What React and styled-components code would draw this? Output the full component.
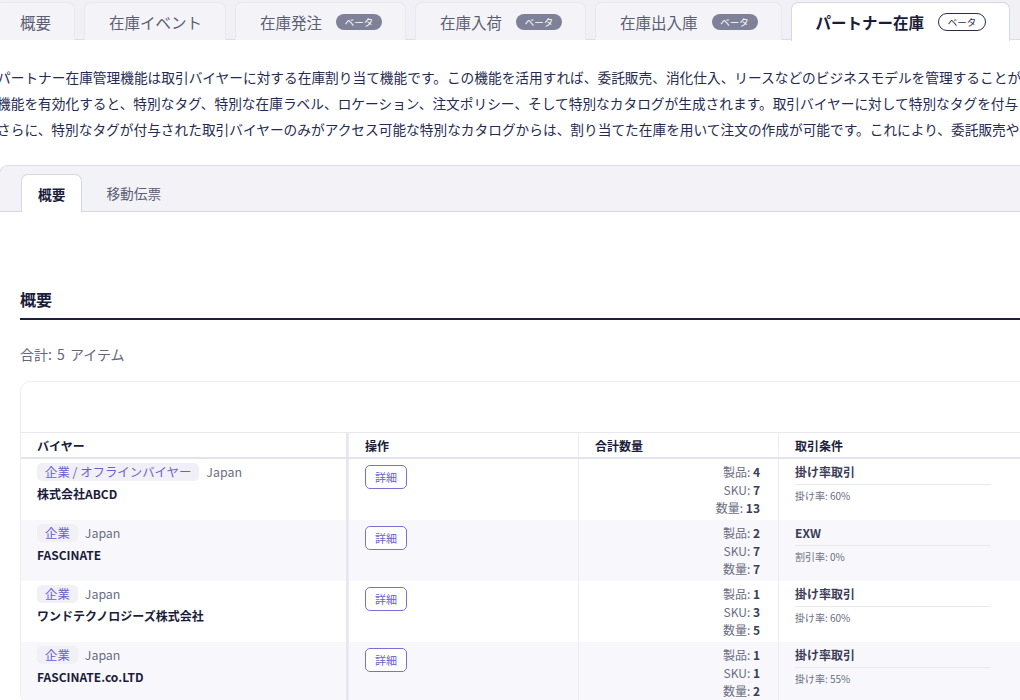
import React from "react";
import styled, { createGlobalStyle, css } from "styled-components";

const Global = createGlobalStyle`
  html, body { margin: 0; padding: 0; background: #ffffff; overflow: hidden; }
  body { font-family: "Noto Sans CJK JP", "Noto Sans", sans-serif; color: #1f2142; width: 1020px; }
  * { box-sizing: border-box; }
`;

const Page = styled.div`
  width: 1020px;
  height: 700px;
  overflow: hidden;
`;

const TabBar = styled.div`
  display: flex;
  gap: 9px;
  margin-left: -5px;
  padding-top: 2px;
  height: 40px;
  background: #f1f1f5;
  border-bottom: 1px solid #dcdce5;
  width: 1030px;
`;

const Tab = styled.div`
  display: flex;
  align-items: center;
  gap: 14px;
  height: 38px;
  padding: 0 23px 0 24px;
  font-size: 15.5px;
  color: #5b5e75;
  background: #f4f4f8;
  border: 1px solid #e8e8ee;
  border-bottom: none;
  border-radius: 7px 7px 0 0;
  white-space: nowrap;
  ${(p) =>
    p.$active &&
    css`
      background: #ffffff;
      border-color: #d8d8e2;
      color: #1b1c3c;
      font-weight: 700;
      height: 39px;
      margin-bottom: -1px;
    `}
`;

const Badge = styled.span`
  display: inline-flex;
  align-items: center;
  justify-content: center;
  width: 46px;
  height: 16px;
  border-radius: 8px;
  font-size: 9.5px;
  font-weight: 400;
  background: #7e8198;
  color: #ffffff;
  ${(p) =>
    p.$outline &&
    css`
      background: transparent;
      color: #2a2c4a;
      border: 1px solid #2a2c4a;
      width: 48px;
      height: 18px;
      border-radius: 9px;
    `}
`;

const Description = styled.div`
  padding-top: 24px;
  margin-left: -3px;
  font-size: 13.7px;
  line-height: 26px;
  color: #262a52;
`;

const Line = styled.div`
  white-space: nowrap;
`;

const SubTabBar = styled.div`
  margin-top: 23px;
  margin-left: -1px;
  width: 1030px;
  height: 47px;
  padding: 9px 0 0 21px;
  display: flex;
  align-items: flex-end;
  gap: 7px;
  background: #f3f3f7;
  border-top: 1px solid #dcdce4;
  border-left: 1px solid #dcdce4;
  border-bottom: 1px solid #d8d8e2;
  border-top-left-radius: 9px;
`;

const SubTab = styled.div`
  height: 37px;
  display: flex;
  align-items: center;
  padding: 0 16px;
  font-size: 13.7px;
  color: #5b5e75;
  border: 1px solid transparent;
  border-bottom: none;
  border-radius: 7px 7px 0 0;
  ${(p) =>
    p.$active &&
    css`
      background: #ffffff;
      border-color: #d6d6e0;
      color: #1b1c3c;
      font-weight: 700;
      margin-bottom: -1px;
      height: 38px;
    `}
`;

const Main = styled.div`
  padding: 75px 0 0 20px;
  width: 1100px;
`;

const SectionTitle = styled.h2`
  margin: 0;
  font-size: 16px;
  line-height: 24px;
  font-weight: 700;
  color: #1b1c3c;
  padding-bottom: 7px;
  border-bottom: 2px solid #1e1f3e;
`;

const Total = styled.div`
  margin-top: 24px;
  font-size: 14px;
  line-height: 20px;
  color: #62667e;
  word-spacing: 2px;
`;

const Card = styled.div`
  margin-top: 17px;
  border: 1px solid #ececf2;
  border-radius: 10px;
  overflow: hidden;
`;

const Toolbar = styled.div`
  height: 51px;
  border-bottom: 1px solid #e8e8ef;
`;

const Row = styled.div`
  display: grid;
  grid-template-columns: 327px 230px 200px 1fr;
  background: ${(p) => (p.$alt ? "#f8f8fc" : "#ffffff")};
`;

const HeaderRow = styled(Row)`
  height: 26px;
  border-bottom: 2px solid #e3e3eb;
`;

const Cell = styled.div`
  padding: 4px 16px 3px 16px;
  border-left: 1px solid #ececf2;
  ${(p) =>
    p.$first &&
    css`
      border-left: none;
      border-right: 2px solid #e6e6ee;
    `}
  ${(p) =>
    p.$right &&
    css`
      display: flex;
      flex-direction: column;
      align-items: flex-end;
      padding-right: 18px;
    `}
`;

const HeadCell = styled(Cell)`
  display: flex;
  align-items: center;
  padding-top: 0;
  padding-bottom: 0;
  font-size: 12px;
  font-weight: 700;
  color: #1b1c3c;
`;

const BuyerMeta = styled.div`
  display: flex;
  align-items: center;
  gap: 7px;
  height: 18px;
`;

const Tag = styled.span`
  display: inline-flex;
  align-items: center;
  height: 18px;
  padding: 0 8px;
  border-radius: 5px;
  background: #f0f0f6;
  color: #6b5fd2;
  font-size: 12.4px;
`;

const Country = styled.span`
  font-size: 12.4px;
  color: #6a6d82;
`;

const BuyerName = styled.div`
  margin-top: 4px;
  font-size: 12px;
  line-height: 18px;
  font-weight: 700;
  color: #1b1c3c;
`;

const DetailButton = styled.button`
  margin-top: 1px;
  width: 42px;
  height: 24px;
  padding: 0;
  border: 1px solid #7b70d6;
  border-radius: 5px;
  background: #ffffff;
  color: #6b5fd2;
  font-family: inherit;
  font-size: 11px;
`;

const QtyLine = styled.div`
  font-size: 12px;
  line-height: 18px;
  color: #6a6d82;
  white-space: nowrap;
  b {
    color: #3a3c58;
    font-weight: 700;
  }
`;

const Terms = styled.div`
  width: 196px;
`;

const TermsTitle = styled.div`
  font-size: 12px;
  line-height: 18px;
  font-weight: 700;
  color: #3a3c58;
  padding-bottom: 3px;
  border-bottom: 1px solid #e8e8ef;
`;

const TermsNote = styled.div`
  margin-top: 3px;
  font-size: 10px;
  line-height: 16px;
  color: #6a6d82;
`;

const rows = [
  { tag: "企業 / オフラインバイヤー", name: "株式会社ABCD", p: 4, sku: 7, q: 13, term: "掛け率取引", note: "掛け率: 60%" },
  { tag: "企業", name: "FASCINATE", p: 2, sku: 7, q: 7, term: "EXW", note: "割引率: 0%" },
  { tag: "企業", name: "ワンドテクノロジーズ株式会社", p: 1, sku: 3, q: 5, term: "掛け率取引", note: "掛け率: 60%" },
  { tag: "企業", name: "FASCINATE.co.LTD", p: 1, sku: 1, q: 2, term: "掛け率取引", note: "掛け率: 55%" },
];

const tabs = [
  { label: "概要" },
  { label: "在庫イベント" },
  { label: "在庫発注", beta: true },
  { label: "在庫入荷", beta: true },
  { label: "在庫出入庫", beta: true },
  { label: "パートナー在庫", beta: true, active: true },
];

export default function App() {
  return (
    <Page>
      <Global />
      <TabBar>
        {tabs.map((t) => (
          <Tab key={t.label} $active={t.active}>
            {t.label}
            {t.beta && <Badge $outline={t.active}>ベータ</Badge>}
          </Tab>
        ))}
      </TabBar>
      <Description>
        <Line>
          パートナー在庫管理機能は取引バイヤーに対する在庫割り当て機能です。この機能を活用すれば、委託販売、消化仕入、リースなどのビジネスモデルを管理することが可能です。この
        </Line>
        <Line>
          機能を有効化すると、特別なタグ、特別な在庫ラベル、ロケーション、注文ポリシー、そして特別なカタログが生成されます。取引バイヤーに対して特別なタグを付与してください。
        </Line>
        <Line>
          さらに、特別なタグが付与された取引バイヤーのみがアクセス可能な特別なカタログからは、割り当てた在庫を用いて注文の作成が可能です。これにより、委託販売やリースを管理できます。
        </Line>
      </Description>
      <SubTabBar>
        <SubTab $active>概要</SubTab>
        <SubTab>移動伝票</SubTab>
      </SubTabBar>
      <Main>
        <SectionTitle>概要</SectionTitle>
        <Total>合計: 5 アイテム</Total>
        <Card>
          <Toolbar />
          <HeaderRow>
            <HeadCell $first>バイヤー</HeadCell>
            <HeadCell>操作</HeadCell>
            <HeadCell>合計数量</HeadCell>
            <HeadCell>取引条件</HeadCell>
          </HeaderRow>
          {rows.map((r, i) => (
            <Row key={r.name} $alt={i % 2 === 1}>
              <Cell $first>
                <BuyerMeta>
                  <Tag>{r.tag}</Tag>
                  <Country>Japan</Country>
                </BuyerMeta>
                <BuyerName>{r.name}</BuyerName>
              </Cell>
              <Cell>
                <DetailButton>詳細</DetailButton>
              </Cell>
              <Cell $right>
                <QtyLine>
                  製品: <b>{r.p}</b>
                </QtyLine>
                <QtyLine>
                  SKU: <b>{r.sku}</b>
                </QtyLine>
                <QtyLine>
                  数量: <b>{r.q}</b>
                </QtyLine>
              </Cell>
              <Cell>
                <Terms>
                  <TermsTitle>{r.term}</TermsTitle>
                  <TermsNote>{r.note}</TermsNote>
                </Terms>
              </Cell>
            </Row>
          ))}
        </Card>
      </Main>
    </Page>
  );
}
